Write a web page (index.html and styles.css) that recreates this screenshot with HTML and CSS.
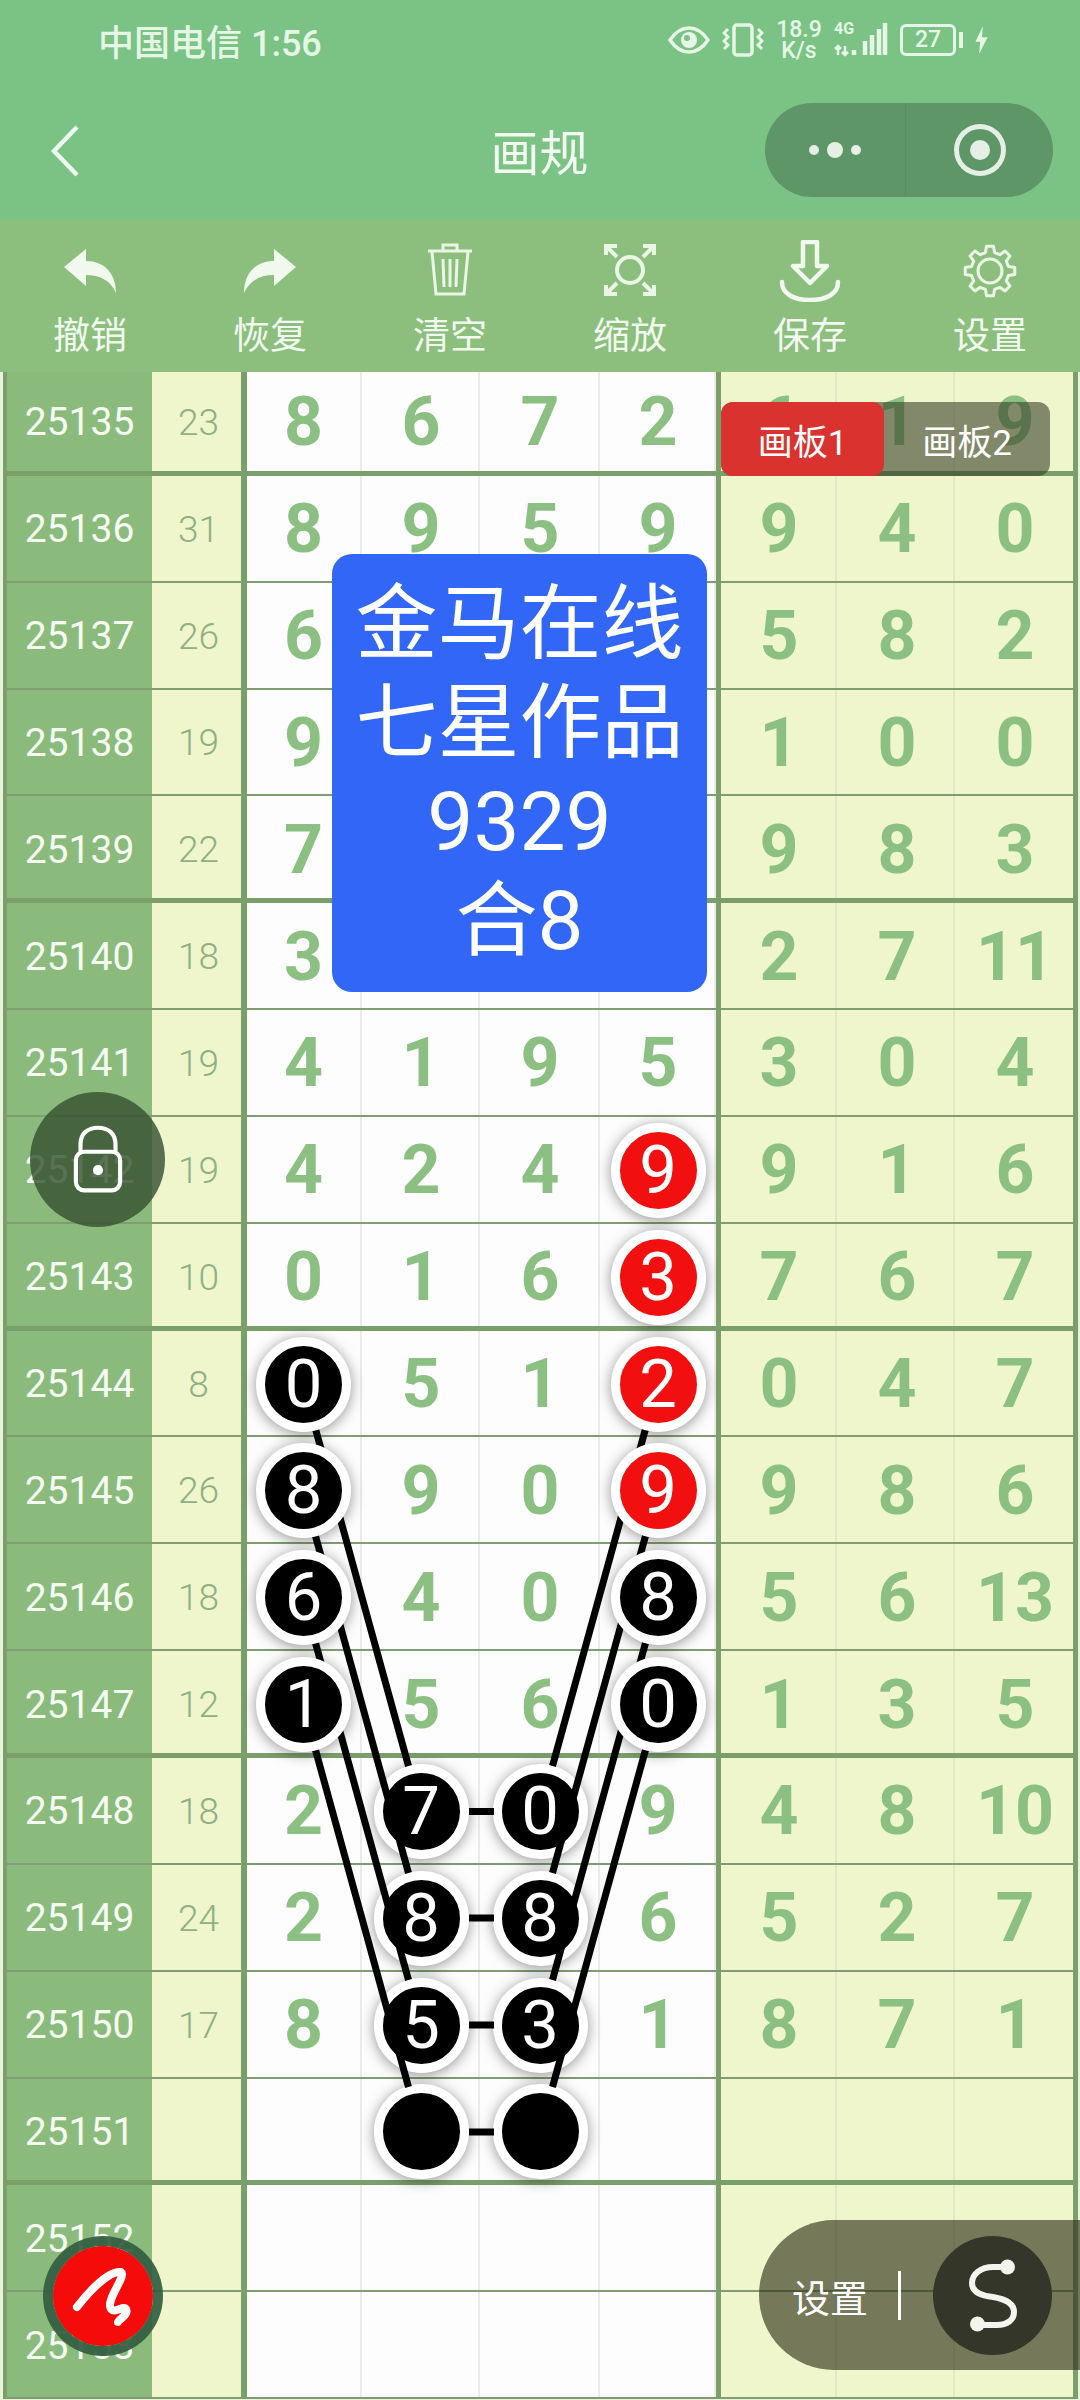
FILE: index.html
```html
<!DOCTYPE html>
<html lang="zh-CN">
<head>
    <meta charset="UTF-8">
    <meta name="viewport" content="width=device-width, initial-scale=1.0">
    <title>画规</title>
    <link rel="stylesheet" href="styles.css">
</head>
<body>

<header class="top">
    <div class="status">
        <div class="carrier">中国电信 1:56</div>
        <div class="status-icons">
            <svg class="ic-eye" width="42" height="28" viewBox="0 0 42 28"><path d="M2 14C8 5 14 2 21 2s13 3 19 12c-6 9-12 12-19 12S8 23 2 14Z" fill="none" stroke="#e6f6e6" stroke-width="3.5"/><circle cx="21" cy="14" r="8" fill="#e6f6e6"/><circle cx="19" cy="12" r="3" fill="#7bc285"/></svg>
            <svg class="ic-vib" width="42" height="34" viewBox="0 0 42 34"><rect x="12" y="2" width="18" height="30" rx="3" fill="none" stroke="#e6f6e6" stroke-width="3.5"/><path d="M6 6 2 10l4 4-4 4 4 4-4 4M36 6l4 4-4 4 4 4-4 4 4 4" fill="none" stroke="#e6f6e6" stroke-width="3"/></svg>
            <div class="speed"><span>18.9</span><span>K/s</span></div>
            <div class="signal">
                <span class="net">4G</span>
                <svg width="54" height="34" viewBox="0 0 54 34"><path d="M4 32v-9M1 26l3-3 3 3M11 23v9M8 29l3 3 3-3" fill="none" stroke="#e6f6e6" stroke-width="2.5"/><path d="M20 32v-5M31 32V18M38 32V12M45 32V6M51 32V0" stroke="#e6f6e6" stroke-width="4.5"/></svg>
            </div>
            <div class="battery"><span class="battery-box">27</span><span class="battery-nub"></span></div>
            <svg width="13" height="28" viewBox="0 0 13 30"><path d="M8 0 0 17h5l-1 13 9-18H7Z" fill="#e6f6e6"/></svg>
        </div>
    </div>
    <div class="titlebar">
        <svg class="back" width="30" height="52" viewBox="0 0 30 52"><path d="M27 2 4 26l23 24" fill="none" stroke="#eef8ee" stroke-width="4.5"/></svg>
        <div class="title">画规</div>
        <div class="capsule">
            <div class="capsule-dots"><i></i><b></b><i></i></div>
            <div class="capsule-target"><b></b></div>
        </div>
    </div>
    <nav class="toolbar">
        <div class="tool">
            <svg width="56" height="62" viewBox="0 0 56 62"><path d="M2 27 24 9v12c18 0 30 12 30 32-6-13-16-18-30-18v11Z" fill="#f1f8ee"/></svg>
            <span>撤销</span>
        </div>
        <div class="tool">
            <svg width="56" height="62" viewBox="0 0 56 62"><path d="M54 27 32 9v12C14 21 2 33 2 53c6-13 16-18 30-18v11Z" fill="#f1f8ee"/></svg>
            <span>恢复</span>
        </div>
        <div class="tool">
            <svg width="48" height="62" viewBox="0 0 48 62" fill="none" stroke="#eaf5e6" stroke-width="3"><path d="M2 11h44M17 10V5h14v5M6 12l4 42h28l4-42M17 19l1 28M24 19v28M31 19l-1 28"/></svg>
            <span>清空</span>
        </div>
        <div class="tool">
            <svg width="52" height="62" viewBox="0 0 52 62" fill="none" stroke="#eaf5e6" stroke-width="4"><circle cx="26" cy="30" r="13"/><path d="M2 15V6h11M50 15V6H39M2 45v9h11M50 45v9H39M3 7l10 10M49 7 39 17M3 53l10-10M49 53 39 43"/></svg>
            <span>缩放</span>
        </div>
        <div class="tool">
            <svg width="62" height="62" viewBox="0 0 62 62" fill="none" stroke="#f1f8ee" stroke-width="4.5"><path d="M24 2h14v24h10L31 43 14 26h10Z" stroke-linejoin="round"/><path d="M3 42c0 12 12 18 28 18s28-6 28-18" stroke-linecap="round"/></svg>
            <span>保存</span>
        </div>
        <div class="tool">
            <svg width="54" height="62" viewBox="0 0 54 54" fill="none" stroke="#eaf5e6" stroke-width="3" stroke-linejoin="round"><g transform="translate(27 27)"><path d="M-4.6-18.44-3.48-24.76 3.48-24.76 4.6-18.44 9.79-16.29 15.05-19.97 19.97-15.05 16.29-9.79 18.44-4.6 24.76-3.48 24.76 3.48 18.44 4.6 16.29 9.79 19.97 15.05 15.05 19.97 9.79 16.29 4.6 18.44 3.48 24.76-3.48 24.76-4.6 18.44-9.79 16.29-15.05 19.97-19.97 15.05-16.29 9.79-18.44 4.6-24.76 3.48-24.76-3.48-18.44-4.6-16.29-9.79-19.97-15.05-15.05-19.97-9.79-16.29Z"/><circle r="12"/></g></svg>
            <span>设置</span>
        </div>
    </nav>
</header>

<main class="board">
    <div class="row thick"><div class="no">25135</div><div class="sum">23</div><div class="cell first">8</div><div class="cell">6</div><div class="cell">7</div><div class="cell">2</div><div class="cell side">6</div><div class="cell tint">1</div><div class="cell tint">9</div></div>
    <div class="row"><div class="no">25136</div><div class="sum">31</div><div class="cell first">8</div><div class="cell">9</div><div class="cell">5</div><div class="cell">9</div><div class="cell side">9</div><div class="cell tint">4</div><div class="cell tint">0</div></div>
    <div class="row"><div class="no">25137</div><div class="sum">26</div><div class="cell first">6</div><div class="cell"></div><div class="cell"></div><div class="cell"></div><div class="cell side">5</div><div class="cell tint">8</div><div class="cell tint">2</div></div>
    <div class="row"><div class="no">25138</div><div class="sum">19</div><div class="cell first">9</div><div class="cell"></div><div class="cell"></div><div class="cell"></div><div class="cell side">1</div><div class="cell tint">0</div><div class="cell tint">0</div></div>
    <div class="row thick"><div class="no">25139</div><div class="sum">22</div><div class="cell first">7</div><div class="cell"></div><div class="cell"></div><div class="cell"></div><div class="cell side">9</div><div class="cell tint">8</div><div class="cell tint">3</div></div>
    <div class="row"><div class="no">25140</div><div class="sum">18</div><div class="cell first">3</div><div class="cell"></div><div class="cell"></div><div class="cell"></div><div class="cell side">2</div><div class="cell tint">7</div><div class="cell tint">11</div></div>
    <div class="row"><div class="no">25141</div><div class="sum">19</div><div class="cell first">4</div><div class="cell">1</div><div class="cell">9</div><div class="cell">5</div><div class="cell side">3</div><div class="cell tint">0</div><div class="cell tint">4</div></div>
    <div class="row"><div class="no">25142</div><div class="sum">19</div><div class="cell first">4</div><div class="cell">2</div><div class="cell">4</div><div class="cell"><span class="ball up red">9</span></div><div class="cell side">9</div><div class="cell tint">1</div><div class="cell tint">6</div></div>
    <div class="row thick"><div class="no">25143</div><div class="sum">10</div><div class="cell first">0</div><div class="cell">1</div><div class="cell">6</div><div class="cell"><span class="ball up red">3</span></div><div class="cell side">7</div><div class="cell tint">6</div><div class="cell tint">7</div></div>
    <div class="row"><div class="no">25144</div><div class="sum">8</div><div class="cell first"><span class="ball up">0</span></div><div class="cell">5</div><div class="cell">1</div><div class="cell"><span class="ball up red">2</span></div><div class="cell side">0</div><div class="cell tint">4</div><div class="cell tint">7</div></div>
    <div class="row"><div class="no">25145</div><div class="sum">26</div><div class="cell first"><span class="ball up">8</span></div><div class="cell">9</div><div class="cell">0</div><div class="cell"><span class="ball up red">9</span></div><div class="cell side">9</div><div class="cell tint">8</div><div class="cell tint">6</div></div>
    <div class="row"><div class="no">25146</div><div class="sum">18</div><div class="cell first"><span class="ball up">6</span></div><div class="cell">4</div><div class="cell">0</div><div class="cell"><span class="ball up">8</span></div><div class="cell side">5</div><div class="cell tint">6</div><div class="cell tint">13</div></div>
    <div class="row thick"><div class="no">25147</div><div class="sum">12</div><div class="cell first"><span class="ball up">1</span></div><div class="cell">5</div><div class="cell">6</div><div class="cell"><span class="ball up">0</span></div><div class="cell side">1</div><div class="cell tint">3</div><div class="cell tint">5</div></div>
    <div class="row"><div class="no">25148</div><div class="sum">18</div><div class="cell first">2</div><div class="cell"><span class="ball">7</span></div><div class="cell"><span class="ball">0</span></div><div class="cell">9</div><div class="cell side">4</div><div class="cell tint">8</div><div class="cell tint">10</div></div>
    <div class="row"><div class="no">25149</div><div class="sum">24</div><div class="cell first">2</div><div class="cell"><span class="ball">8</span></div><div class="cell"><span class="ball">8</span></div><div class="cell">6</div><div class="cell side">5</div><div class="cell tint">2</div><div class="cell tint">7</div></div>
    <div class="row"><div class="no">25150</div><div class="sum">17</div><div class="cell first">8</div><div class="cell"><span class="ball">5</span></div><div class="cell"><span class="ball">3</span></div><div class="cell">1</div><div class="cell side">8</div><div class="cell tint">7</div><div class="cell tint">1</div></div>
    <div class="row thick"><div class="no">25151</div><div class="sum"></div><div class="cell first"></div><div class="cell"><span class="ball"></span></div><div class="cell"><span class="ball"></span></div><div class="cell"></div><div class="cell side"></div><div class="cell tint"></div><div class="cell tint"></div></div>
    <div class="row"><div class="no">25152</div><div class="sum"></div><div class="cell first"></div><div class="cell"></div><div class="cell"></div><div class="cell"></div><div class="cell side"></div><div class="cell tint"></div><div class="cell tint"></div></div>
    <div class="row"><div class="no">25153</div><div class="sum"></div><div class="cell first"></div><div class="cell"></div><div class="cell"></div><div class="cell"></div><div class="cell side"></div><div class="cell tint"></div><div class="cell tint"></div></div>

    <!-- lines between the picked balls, drawn in page coordinates -->
    <svg class="links" width="1080" height="2031" viewBox="0 369 1080 2031" stroke="#000" stroke-width="7">
        <path d="M315.5 1429 408.5 1766M315.5 1536 408.5 1873M315.5 1643 408.5 1980M315.5 1750 408.5 2087"/>
        <path d="M645.5 1429 552.5 1766M645.5 1536 552.5 1873M645.5 1643 552.5 1980M645.5 1750 552.5 2087"/>
        <path d="M469 1811.5h25M469 1918h25M469 2025h25M469 2132h25"/>
    </svg>

    <div class="tabs">
        <div class="tab on">画板1</div>
        <div class="tab">画板2</div>
    </div>

    <div class="note">
        <div>金马在线</div>
        <div>七星作品</div>
        <div>9329</div>
        <div>合8</div>
    </div>

    <div class="lock">
        <svg width="56" height="70" viewBox="0 0 60 76" fill="none" stroke="#fff" stroke-width="4.5"><path d="M11 30V21C11 9 19 3 30 3s19 6 19 18v9"/><rect x="6" y="29" width="48" height="42" rx="9"/><circle cx="30" cy="49" r="5.5" fill="#fff" stroke="none"/></svg>
    </div>

    <div class="pen">
        <svg width="100" height="100" viewBox="0 0 100 100" fill="none" stroke="#fff" stroke-width="8" stroke-linecap="round" stroke-linejoin="round"><path d="M24 61C38 43 56 25 68 26 74 30 52 54 58 63 62 68 70 59 73 63 76 69 66 73 65 76"/></svg>
    </div>

    <div class="settings">
        <span class="settings-text">设置</span>
        <span class="settings-bar"></span>
        <div class="settings-btn">
            <svg width="119" height="119" viewBox="0 0 119 119" fill="none" stroke="#f4f4ee" stroke-width="6"><path d="M74 31H60C48 31 39 38 39 47 39 57 50 60 60 61 72 63 81 67 81 76 81 84 74 89 64 89H45"/><circle cx="74.5" cy="31" r="7.5" fill="#f4f4ee" stroke="none"/><circle cx="44.5" cy="88" r="7.5" fill="#f4f4ee" stroke="none"/></svg>
        </div>
    </div>
</main>

</body>
</html>
```

FILE: styles.css
```css
html, body {
    margin: 0;
    height: 2400px;
    overflow: hidden;
}

body {
    width: 1080px;
    background-color: #e9f3d8;
    font-family: "Noto Sans CJK SC", Roboto, sans-serif;
}

/* header */
.top {
    position: relative;
    z-index: 5;
    background-color: #7bc285;
    color: #eef8ee;
}

.status {
    height: 82px;
    display: flex;
    justify-content: space-between;
    align-items: center;
    padding: 0 92px 2px 98px;
    box-sizing: border-box;
}

.carrier {
    font-family: Roboto, "Noto Sans CJK SC", sans-serif;
    font-size: 36px;
    font-weight: 500;
    color: #e6f6e6;
    white-space: nowrap;
}

.status-icons {
    display: flex;
    align-items: center;
    gap: 12px;
    color: #e6f6e6;
}

.speed {
    display: flex;
    flex-direction: column;
    align-items: center;
    font-family: Roboto, sans-serif;
    font-size: 23px;
    font-weight: 500;
    line-height: 21px;
    width: 46px;
}

.signal {
    position: relative;
    width: 54px;
    height: 34px;
}

.net {
    position: absolute;
    left: 0;
    top: -3px;
    font-family: Roboto, sans-serif;
    font-size: 16px;
    font-weight: 700;
    line-height: 18px;
}

.battery {
    display: flex;
    align-items: center;
    gap: 3px;
}

.battery-box {
    width: 56px;
    height: 32px;
    border: 3px solid #e6f6e6;
    border-radius: 6px;
    box-sizing: border-box;
    text-align: center;
    font-family: Roboto, sans-serif;
    font-size: 23px;
    font-weight: 500;
    line-height: 25px;
}

.battery-nub {
    width: 4px;
    height: 16px;
    background: #e6f6e6;
}

.titlebar {
    height: 138px;
    position: relative;
    display: flex;
    justify-content: center;
    align-items: center;
    padding-bottom: 3px;
    box-sizing: border-box;
}

.title {
    font-size: 49px;
    line-height: 60px;
    margin-right: 1px;
    color: #f1f9f1;
}

.back {
    position: absolute;
    left: 50px;
    top: 43px;
}

.capsule {
    position: absolute;
    left: 765px;
    top: 21px;
    width: 288px;
    height: 94px;
    border-radius: 47px;
    background-color: #5e9667;
    display: flex;
}

.capsule-dots {
    width: 140px;
    display: flex;
    justify-content: center;
    align-items: center;
    gap: 8px;
    border-right: 1px solid #5a8f62;
}

.capsule-dots i {
    width: 10px;
    height: 10px;
    border-radius: 50%;
    background: #e5efe5;
}

.capsule-dots b {
    width: 16px;
    height: 16px;
    border-radius: 50%;
    background: #e5efe5;
}

.capsule-target {
    flex: 1;
    display: flex;
    justify-content: center;
    align-items: center;
}

.capsule-target b {
    width: 20px;
    height: 20px;
    border-radius: 50%;
    background: #e5efe5;
    border: 11px solid #5e9667;
    box-shadow: 0 0 0 5px #e5efe5;
}

.toolbar {
    display: grid;
    grid-template-columns: repeat(6, 180px);
    height: 152px;
    background-color: #8cbf7e;
    box-sizing: border-box;
    padding-top: 20px;
}

.tool {
    display: flex;
    flex-direction: column;
    align-items: center;
    color: #f1f8ee;
}

.tool svg {
    display: block;
}

.tool span {
    font-size: 37px;
    line-height: 44px;
    margin-top: 9px;
}

/* grid */
.board {
    position: relative;
    margin-top: -3px;
    height: 2031px;
    font-family: Roboto, sans-serif;
}

.row {
    --rule: inset 0 -2px 0 #7f9c72;
    display: grid;
    grid-template-columns: 145px 89px 121px 118px 120px 116px 121px 118px 118px;
    height: 106.85px;
    margin-left: 3px;
    width: 1075px;
    box-sizing: border-box;
    border-left: 4px solid #7a9f6a;
    border-right: 5px solid #7a9f6a;
}

.row.thick {
    --rule: inset 0 -5px 0 #7a9f6a;
}

.no, .sum, .cell {
    display: flex;
    justify-content: center;
    align-items: center;
    box-sizing: border-box;
    box-shadow: var(--rule);
}

.no {
    background-color: #8abb7c;
    color: #f6fbf2;
    font-size: 39px;
}

.sum {
    padding-left: 4px;
    background-color: #eff6cc;
    color: #8fb083;
    font-size: 37px;
    font-weight: 300;
}

.cell {
    background-color: #fdfdfd;
    color: #8cc083;
    font-size: 68px;
    font-weight: 700;
    box-shadow: var(--rule), inset -2px 0 0 #ebebe8;
}

.first {
    padding-right: 2px;
    border-left: 6px solid #7a9f6a;
}

.side {
    background-color: #eff6cc;
    border-left: 5px solid #7a9f6a;
    box-shadow: var(--rule), inset -2px 0 0 #e3e9c6;
}

.tint {
    padding-left: 2px;
    background-color: #eff6cc;
    box-shadow: var(--rule), inset -2px 0 0 #e3e9c6;
}

.tint:last-child {
    box-shadow: var(--rule);
}

.ball {
    position: relative;
    z-index: 1;
    flex: none;
    width: 77px;
    height: 77px;
    border: 9px solid #fff;
    border-radius: 50%;
    background-color: #000;
    box-shadow: 0 2px 14px rgba(0,0,0,0.42);
    color: #fff;
    font-size: 67px;
    font-weight: 400;
    line-height: 77px;
    text-align: center;
}

/* the outer columns sit over the link lines, the middle ones under */
.ball.up {
    z-index: 3;
}

.red {
    background-color: #f20f0f;
}

.links {
    position: absolute;
    left: 0;
    top: 0;
    z-index: 2;
}

/* floating things */
.tabs {
    position: absolute;
    left: 721px;
    top: 33px;
    z-index: 3;
    display: flex;
    width: 329px;
    height: 74px;
    border-radius: 12px;
    background-color: rgba(52,58,36,0.58);
}

.tab {
    flex: 1;
    display: flex;
    justify-content: center;
    align-items: center;
    border-radius: 12px;
    color: #fff;
    font-family: Roboto, "Noto Sans CJK SC", sans-serif;
    font-size: 35px;
}

.tab.on {
    flex: none;
    width: 163px;
    background-color: #d9322f;
}

.note {
    position: absolute;
    left: 332px;
    top: 185px;
    z-index: 3;
    width: 375px;
    height: 438px;
    box-sizing: border-box;
    padding-top: 21px;
    border-radius: 20px;
    background-color: #3166f6;
    color: #fff;
    font-family: Roboto, "Noto Sans CJK SC", sans-serif;
    font-size: 82px;
    line-height: 99px;
    text-align: center;
}

.lock {
    position: absolute;
    left: 30px;
    top: 723px;
    z-index: 3;
    width: 135px;
    height: 135px;
    border-radius: 50%;
    background-color: rgba(55,82,50,0.82);
    display: flex;
    justify-content: center;
    align-items: center;
}

.pen {
    position: absolute;
    left: 43px;
    top: 1867px;
    z-index: 3;
    width: 100px;
    height: 100px;
    border: 10px solid rgba(50,92,64,0.92);
    border-radius: 50%;
    background-color: #f60b0b;
    background-clip: padding-box;
}

.settings {
    position: absolute;
    left: 759px;
    top: 1851px;
    z-index: 3;
    width: 321px;
    height: 150px;
    border-radius: 75px 0 0 75px;
    background-color: rgba(50,52,28,0.65);
    display: flex;
    align-items: center;
    color: #fff;
}

.settings-text {
    margin-left: 33px;
    font-family: "Noto Sans CJK SC", sans-serif;
    font-size: 38px;
}

.settings-bar {
    width: 3px;
    height: 49px;
    margin-left: 30px;
    background: #fff;
}

.settings-btn {
    width: 119px;
    height: 119px;
    margin-left: 32px;
    border-radius: 50%;
    background-color: #34362a;
}
```
